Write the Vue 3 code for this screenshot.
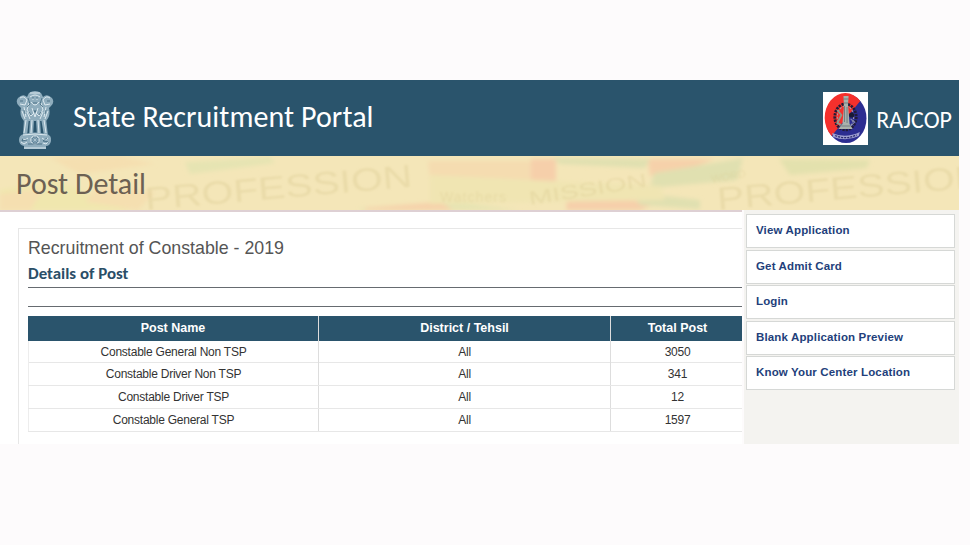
<script setup>
const posts = [
  { name: 'Constable General Non TSP', district: 'All', total: 3050 },
  { name: 'Constable Driver Non TSP', district: 'All', total: 341 },
  { name: 'Constable Driver TSP', district: 'All', total: 12 },
  { name: 'Constable General TSP', district: 'All', total: 1597 },
]
const links = ['View Application', 'Get Admit Card', 'Login', 'Blank Application Preview', 'Know Your Center Location']
</script>

<template>
  <div class="page">
    <header class="header">
      <svg class="emblem" viewBox="0 0 38 60">
        <g fill="#8fadbd">
          <path d="M13 3Q19 -1 25 3L27 7Q31 3 36 8Q39 12 35 16L33 18Q35 26 30 31L8 31Q3 26 5 18L3 16Q-1 12 2 8Q7 3 11 7Z" />
          <path d="M8 28H13L11 46H7ZM14 29H18L17 46H13ZM20 29H24L25 46H21ZM25 28H30L32 46H28Z" />
          <path d="M8 44Q19 41 30 44Q36 45 35 51Q34 56 30 56V59H8V56Q3 55 3 50Q3 45 8 44Z" />
        </g>
        <g fill="none" stroke="#dce9ef" stroke-width="1">
          <path d="M14 3H24M14 7Q19 3 24 7M15 12Q19 18 23 12M16 9H18M20 9H22M4 8Q8 5 11 10L9 15L4 14M34 8Q30 5 27 10L29 15L34 14M13 13L11 20L15 26L19 22L23 26L27 20L25 13M8 17L10 27M30 17L28 27M16 18L19 27L22 18M7 45Q19 43 31 45M8 58H30M10 30L8 43M16 30L15 43M22 30L23 43M28 30L30 43" />
          <path d="M6 48L9 50L12 48M5 52L8 54L11 52M26 48L29 50L32 48M27 53L30 54L33 51M6 21L9 29M32 21L29 29M14 29L11 22M24 29L27 22" />
        </g>
        <circle cx="19" cy="50" r="4.2" fill="#5f8399" stroke="#dce9ef" />
        <path d="M19 46V54M15 50H23M16 47L22 53M22 47L16 53" stroke="#c8dce5" stroke-width=".5" />
        <g fill="none" stroke="#345d74" stroke-width=".7">
          <path d="M12 8L14 14L11 17M26 8L24 14L27 17M17 7V9M21 7V9M17 13H21M13 22L15 25M25 22L23 25M18 20L19 23L20 20M4 11H7M31 11H34M8 20L9 24M30 20L29 24M7 48L6 51L11 50M31 48L27 51L33 52M12 54H26" />
        </g>
      </svg>
      <h1 class="portal">State Recruitment Portal</h1>
      <svg class="badge" viewBox="0 0 44 53" preserveAspectRatio="none">
        <rect width="44" height="53" fill="#fff" />
        <ellipse cx="22.5" cy="26.5" rx="20" ry="24.5" fill="#2c2d91" />
        <path d="M36.4 9A20 24.5 0 1 0 8.4 43.9Z" fill="#f5302c" />
        <ellipse cx="22" cy="25" rx="10.5" ry="13" fill="none" stroke="#211c36" stroke-width="2.7" stroke-dasharray="2.2 1" />
        <ellipse cx="22" cy="25" rx="8" ry="11" fill="none" stroke="#a5a4ae" stroke-width="1" stroke-dasharray="2 1.5" />
        <path d="M20 4H25L24.5 13L26 32L29 37H15L19 32L20.5 14Z" fill="#a9b2ac" />
        <path d="M20 7H25M20.5 11H24.5M21 14V30M23.5 15V31M18 34H27" stroke="#66737a" stroke-width=".8" />
        <path d="M14 18L18 23L14 31L18 33" fill="none" stroke="#8f9a8c" stroke-width="1.8" />
        <circle cx="28" cy="23" r="2.6" fill="#181b35" />
        <path d="M27 27L31 30L27 34" fill="none" stroke="#8689ae" />
        <path d="M9 41Q22 47 36 40L35 44Q23 50 10 45Z" fill="#9d9ed0" />
        <path d="M12 43.5Q22 48 33 43" fill="none" stroke="#29296d" stroke-width="1.3" stroke-dasharray="2 1" />
      </svg>
      <span class="brand">RAJCOP</span>
    </header>

    <div class="banner">
      <svg class="pattern" viewBox="0 0 959 54" preserveAspectRatio="none">
        <defs>
          <filter id="soft" x="-5%" y="-20%" width="110%" height="140%"><feGaussianBlur stdDeviation="2" /></filter>
          <filter id="print" x="-5%" y="-20%" width="110%" height="140%"><feGaussianBlur stdDeviation=".8" /></filter>
        </defs>
        <rect width="959" height="54" fill="#f4e6b8" />
        <g filter="url(#soft)">
          <path d="M0 34L55 24L130 54H0Z" fill="#f0e7ae" />
          <path d="M50 2L120 0L155 8L80 18ZM0 38L45 32L30 54H0ZM100 29L155 36L138 54L85 46Z" fill="#f5dfb0" />
          <path d="M185 6L270 1L275 7L190 18ZM360 52L455 46L520 54H360Z" fill="#e6e4b2" />
          <path d="M428 5H530L553 18V31L430 24Z" fill="#f5dcb0" />
          <path d="M531 3H556V29L531 25ZM568 34L655 48L640 54H566Z" fill="#f6cfaa" />
          <path d="M365 52L440 46L453 54H365ZM648 3H715L680 16L650 20Z" fill="#f6d1aa" />
          <path d="M553 2L650 3L645 12L560 8ZM654 17L743 2L737 24L650 32ZM630 36L700 44V53L640 49Z" fill="#e0e0b0" />
          <path d="M430 19L660 30L665 44L430 48Z" fill="#f0e5b2" />
          <path d="M779 3L870 4L867 12L790 19Z" fill="#e3e1ad" />
        </g>
        <g class="words" filter="url(#print)">
          <text x="146" y="54" font-size="32" textLength="268" lengthAdjust="spacingAndGlyphs" transform="rotate(-5 146 54)">PROFESSION</text>
          <text x="440" y="46" font-size="14" textLength="66">Watchers</text>
          <text x="530" y="49" font-size="19" textLength="119" lengthAdjust="spacingAndGlyphs" transform="rotate(-9 530 49)">MISSION</text>
          <text x="712" y="27" font-size="11" transform="rotate(-10 712 27)">WORD</text>
          <text x="718" y="54" font-size="32" textLength="268" lengthAdjust="spacingAndGlyphs" transform="rotate(-5 718 54)">PROFESSION</text>
        </g>
      </svg>
      <h2 class="page-title">Post Detail</h2>
    </div>

    <div class="body">
      <main class="main">
        <section class="card">
          <h3 class="recruitment">Recruitment of Constable - 2019</h3>
          <h4 class="details">Details of Post</h4>
          <div class="rules"></div>
          <div class="table">
            <div class="row head">
              <span>Post Name</span><span>District / Tehsil</span><span>Total Post</span>
            </div>
            <div v-for="post in posts" :key="post.name" class="row">
              <span>{{ post.name }}</span><span>{{ post.district }}</span><span>{{ post.total }}</span>
            </div>
          </div>
        </section>
      </main>
      <nav class="side">
        <a v-for="link in links" :key="link" class="link">{{ link }}</a>
      </nav>
    </div>
  </div>
</template>

<style>
body { background: #fdfbfc; }
</style>

<style scoped>
* { box-sizing: border-box; }
h1, h2, h3, h4 { margin: 0; font-weight: 400; white-space: nowrap; }
.page { width: 970px; height: 545px; padding-top: 80px; overflow: hidden; font-family: "Liberation Sans", Arial, sans-serif; }
.header { width: 959px; height: 76px; display: flex; align-items: center; padding: 0 7px 0 16px; background: #2a546c; color: #fff; font-family: Carlito, Lato, sans-serif; }
.emblem { width: 38px; height: 60px; margin-top: 4px; flex: none; }
.portal { margin-left: 19px; margin-top: -3px; font-size: 30px; line-height: 34px; letter-spacing: .07px; }
.badge { width: 45px; height: 53px; margin-left: auto; flex: none; }
.brand { margin-left: 8px; margin-top: 3px; font-size: 24px; line-height: 28px; }
.banner { width: 959px; height: 54px; display: grid; align-items: center; }
.banner > * { grid-area: 1 / 1; }
.pattern { width: 959px; height: 54px; display: block; }
.words { fill: #d9c78e; fill-opacity: .36; font-family: "Liberation Sans", sans-serif; }
.page-title { padding: 2px 0 0 16px; color: #6c6153; font-family: Carlito, Lato, sans-serif; font-size: 30px; line-height: 34px; position: relative; }
.body { width: 959px; height: 234px; display: flex; }
.main { width: 742px; height: 234px; padding: 16px 0 0 18px; background: #fff; border-top: 2px solid #ded0d4; overflow: hidden; }
.card { height: 216px; padding: 7px 0 0 9px; border: solid #e7e7e7; border-width: 1px 0 0 1px; }
.recruitment { color: #555; font-size: 17.8px; line-height: 24px; }
.details { color: #2a4e67; font-family: Carlito, Lato, sans-serif; font-size: 16.9px; font-weight: 700; line-height: 27px; }
.rules { height: 20px; border: solid #666b70; border-width: 1px 0; }
.table { margin-top: 9px; width: 717px; font-size: 12px; letter-spacing: -.24px; color: #333; }
.row { height: 22.8px; display: grid; grid-template-columns: 290px 292px 134px; border-bottom: 1px solid #e7e7e7; text-align: center; line-height: 22px; }
.row span + span { border-left: 1px solid #ddd; }
.head { height: 24.6px; background: #2a546c; border: 0; color: #fff; font-size: 12.5px; font-weight: 700; letter-spacing: 0; line-height: 24px; }
.row:not(.head) span:first-child { border-left: 1px solid #ededed; }
.side { width: 215px; margin-left: 2px; padding: 4px 4px 0 2px; background: #f4f3f0; display: flex; flex-direction: column; gap: 1.6px; }
.link { height: 34px; flex: none; padding-left: 9px; border: 1px solid #d6d8d6; background: #fff; color: #233f7b; font-size: 11.5px; letter-spacing: .15px; font-weight: 700; line-height: 31px; white-space: nowrap; }
</style>
